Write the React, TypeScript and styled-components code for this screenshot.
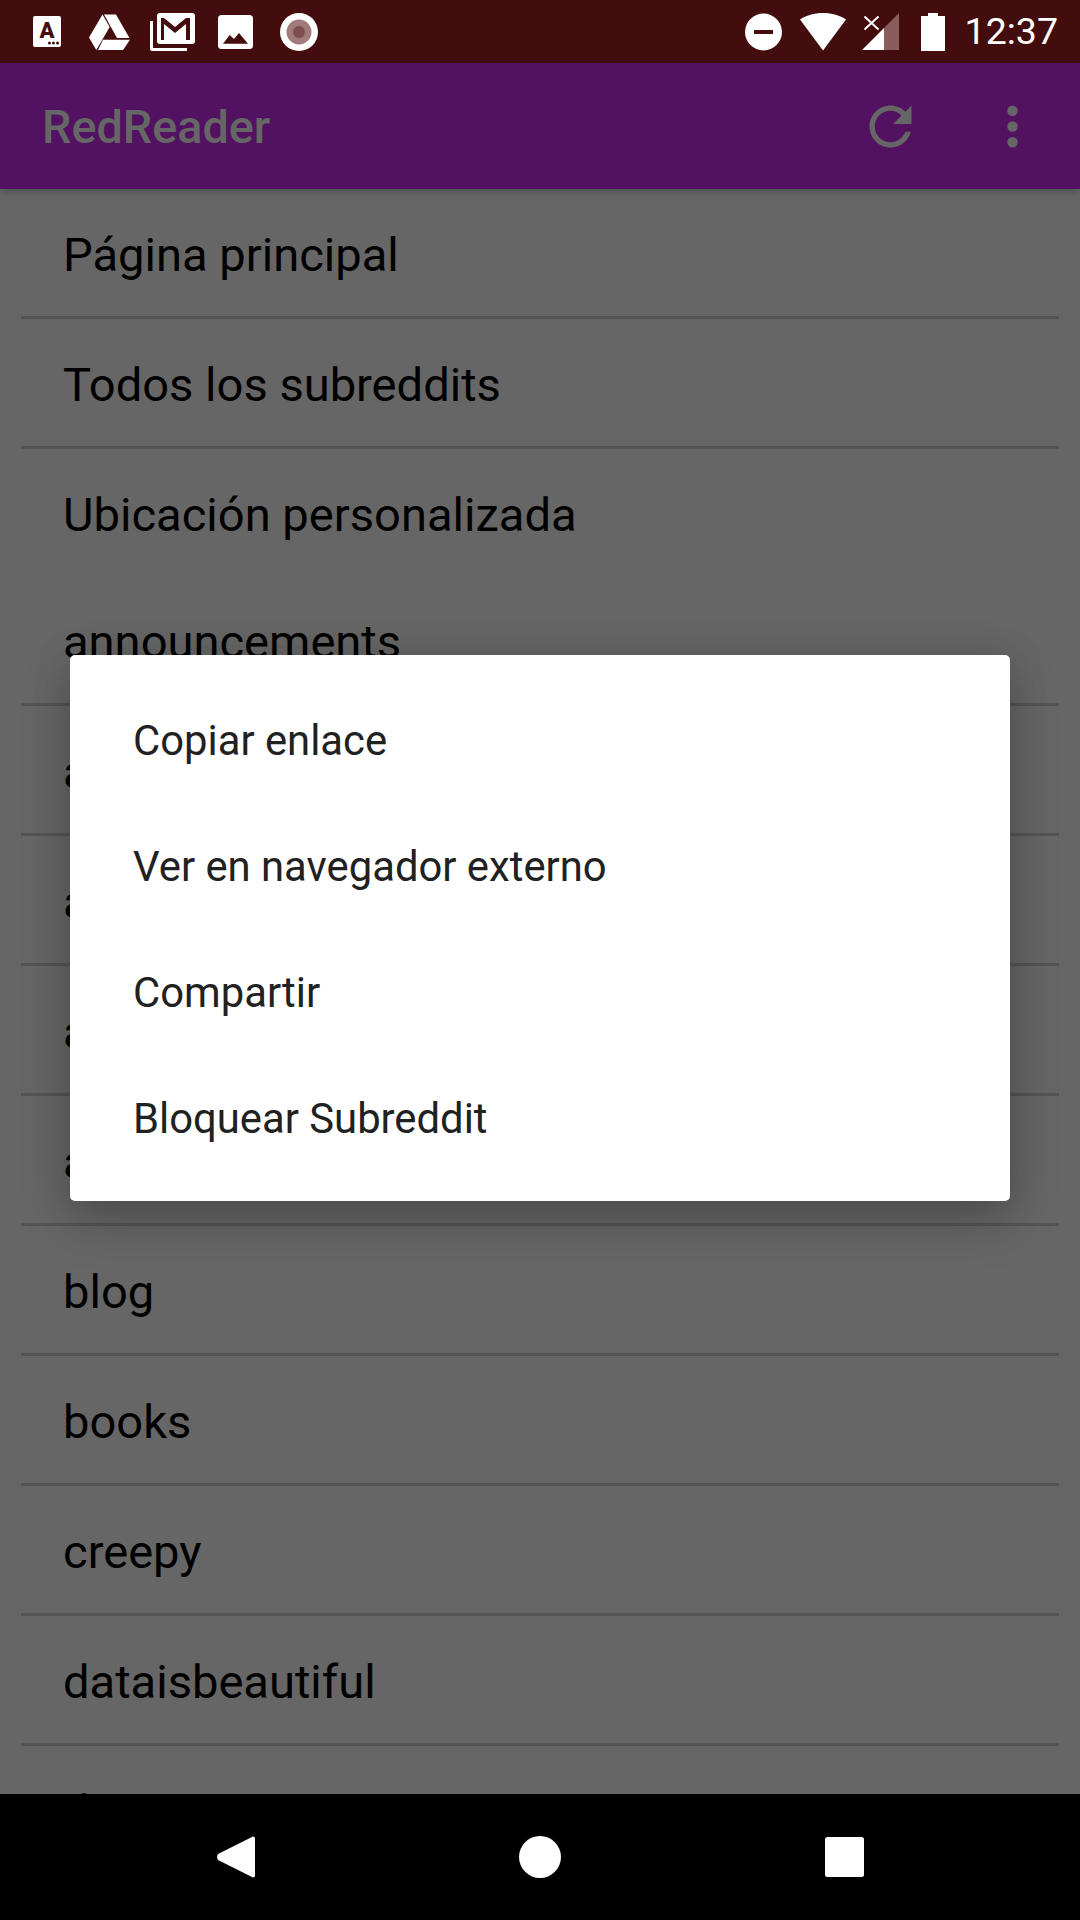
import { createGlobalStyle } from "styled-components";
import styled from "styled-components";

const subreddits = [
  "Página principal",
  "Todos los subreddits",
  "Ubicación personalizada",
  "announcements",
  "art",
  "askreddit",
  "askscience",
  "aww",
  "blog",
  "books",
  "creepy",
  "dataisbeautiful",
  "diy",
];

const menuItems = [
  "Copiar enlace",
  "Ver en navegador externo",
  "Compartir",
  "Bloquear Subreddit",
];

export default function App() {
  return (
    <Page>
      <GlobalStyle />
      <StatusBar>
        <Slot>
          <svg width="28" height="31" viewBox="0 0 28 31">
            <rect width="28" height="31" rx="2" fill="#fff" />
            <text x="14" y="22" textAnchor="middle" fontFamily="Roboto" fontWeight="900" fontSize="22" fill="#440d0d">
              A
            </text>
            <circle cx="16.5" cy="27" r="1.5" fill="#440d0d" />
            <circle cx="20.5" cy="27" r="1.5" fill="#440d0d" />
            <circle cx="24.5" cy="27" r="1.5" fill="#440d0d" />
          </svg>
        </Slot>
        <Slot>
          <svg width="41" height="36" viewBox="0 0 41 36" fill="#fff">
            <path d="M15 .500H27L40.500 24H28z" />
            <path d="M0 23.500 13.500 .500 20.700 13 7.300 36z" />
            <path d="M14 25.700H41L34 36H9z" />
          </svg>
        </Slot>
        <Slot>
          <svg width="45" height="38" viewBox="0 0 45 38">
            <path d="M0 8h3v27h34v3H2a2 2 0 0 1-2-2z" fill="#fff" />
            <rect x="7" y="0" width="38" height="31" rx="3" fill="#fff" />
            <path d="M11 5h3l11 9 11-9h4v22h-4V11l-11 9-11-9v16h-3z" fill="#440d0d" />
          </svg>
        </Slot>
        <Slot>
          <svg width="35" height="34" viewBox="0 0 35 34">
            <rect width="35" height="34" rx="3.500" fill="#fff" />
            <path d="M5 28.700 11.700 20l4.300 4 5-6 9 10.700z" fill="#440d0d" />
          </svg>
        </Slot>
        <Slot>
          <svg width="38" height="38" viewBox="0 0 38 38">
            <circle cx="19" cy="19" r="19" fill="#fff" />
            <circle cx="19" cy="19" r="12.500" fill="#a17a7a" />
            <circle cx="19" cy="19" r="6" fill="#7c4f4f" />
          </svg>
        </Slot>
        <StatusRight>
          <StatusIcon width="37" height="38" viewBox="0 0 37 38">
            <circle cx="18.500" cy="19" r="18.500" fill="#fff" />
            <rect x="9" y="17" width="19" height="4" fill="#440d0d" />
          </StatusIcon>
          <StatusIcon $gap={18} width="46" height="38" viewBox="0 0 46 38">
            <path d="M0 6.500C6 2.500 14 0 23 0s17 2.500 23 6.500L23 37.500z" fill="#fff" />
          </StatusIcon>
          <StatusIcon $gap={16} width="37" height="38" viewBox="0 0 37 38">
            <path d="M22 15 37 0v37H22z" fill="#8a5c5c" />
            <path d="M0 37 22 15v22z" fill="#fff" />
            <path d="M2.500 3.500 16.500 16.500M16.500 3.500 2.500 16.500" stroke="#fff" strokeWidth="2" />
          </StatusIcon>
          <StatusIcon $gap={22} width="24" height="38" viewBox="0 0 24 38">
            <path d="M7 0h10v3h7v35H0V3h7z" fill="#fff" />
          </StatusIcon>
          <Clock>12:37</Clock>
        </StatusRight>
      </StatusBar>

      <AppBar>
        <AppTitle>RedReader</AppTitle>
        <AppActions>
          <svg width="63" height="63" viewBox="0 0 24 24" fill="#666">
            <path d="M17.650 6.350C16.200 4.900 14.210 4 12 4c-4.420 0-7.990 3.580-7.990 8s3.570 8 7.990 8c3.730 0 6.840-2.550 7.730-6h-2.080c-.82 2.330-3.040 4-5.650 4-3.310 0-6-2.690-6-6s2.690-6 6-6c1.660 0 3.140.69 4.220 1.780L13 11h7V4l-2.350 2.350z" />
          </svg>
          <svg width="63" height="63" viewBox="0 0 24 24" fill="#666">
            <circle cx="12" cy="6" r="2" />
            <circle cx="12" cy="12" r="2" />
            <circle cx="12" cy="18" r="2" />
          </svg>
        </AppActions>
      </AppBar>

      <List>
        {subreddits.map((name, i) => (
          <Row key={name} $plain={i === 2}>
            {name}
          </Row>
        ))}
      </List>

      <NavBar>
        <NavSlot>
          <svg width="38" height="42" viewBox="0 0 38 42" fill="#fff">
            <path d="M36 .500c1 0 2 .8 2 2v37c0 1.200-1 2-2 2-.6 0-1-.3-1.500-.8L1 24c-1.300-1.700-1.300-4.300 0-6L34.500 1.300c.5-.5.9-.8 1.500-.8z" />
          </svg>
        </NavSlot>
        <NavSlot>
          <svg width="42" height="42" viewBox="0 0 42 42" fill="#fff">
            <circle cx="21" cy="21" r="21" />
          </svg>
        </NavSlot>
        <NavSlot>
          <svg width="39" height="40" viewBox="0 0 39 40" fill="#fff">
            <rect width="39" height="40" rx="2.500" />
          </svg>
        </NavSlot>
      </NavBar>

      <Dialog>
        {menuItems.map((item) => (
          <MenuItem key={item}>{item}</MenuItem>
        ))}
      </Dialog>
    </Page>
  );
}

const GlobalStyle = createGlobalStyle`
  html, body {
    margin: 0;
    padding: 0;
    background: #666;
  }
`;

const Page = styled.div`
  position: relative;
  display: flex;
  flex-direction: column;
  width: 1080px;
  height: 1920px;
  overflow: hidden;
  background: #666;
  font-family: Roboto, "Liberation Sans", sans-serif;
`;

const StatusBar = styled.div`
  display: flex;
  align-items: center;
  flex: none;
  height: 63px;
  padding-left: 15px;
  background: #440d0d;
`;

const Slot = styled.div`
  display: flex;
  align-items: center;
  justify-content: center;
  width: 63px;
  height: 63px;
`;

const StatusRight = styled.div`
  display: flex;
  align-items: center;
  margin-left: auto;
  padding-right: 22px;
`;

const StatusIcon = styled.svg<{ $gap?: number }>`
  display: block;
  margin-left: ${(p) => p.$gap ?? 0}px;
`;

const Clock = styled.span`
  margin-left: 20px;
  color: #fff;
  font-size: 37.5px;
  line-height: 63px;
`;

const AppBar = styled.header`
  position: relative;
  z-index: 1;
  display: flex;
  align-items: center;
  justify-content: space-between;
  flex: none;
  height: 126px;
  padding: 0 36px 0 42px;
  background: #521261;
  box-shadow: 0 3px 8px rgba(0, 0, 0, 0.2);
`;

const AppTitle = styled.h1`
  margin: 2px 0 0;
  color: #666;
  font-size: 46.75px;
  font-weight: 500;
`;

const AppActions = styled.div`
  display: flex;
  gap: 59px;
`;

const List = styled.div`
  flex: 1;
  min-height: 0;
  overflow: hidden;
`;

const Row = styled.div<{ $plain?: boolean }>`
  display: flex;
  align-items: center;
  box-sizing: border-box;
  height: ${(p) => (p.$plain ? 127 : 130)}px;
  margin: 0 21px;
  padding: 3px 0 0 42px;
  border-bottom: ${(p) => (p.$plain ? "none" : "3px solid #545454")};
  color: #000;
  font-size: 47.1px;
`;

const NavBar = styled.nav`
  display: flex;
  align-items: center;
  justify-content: center;
  flex: none;
  height: 126px;
  background: #000;
`;

const NavSlot = styled.div`
  display: flex;
  align-items: center;
  justify-content: center;
  width: 304px;
`;

const Dialog = styled.div`
  position: absolute;
  top: 655px;
  left: 70px;
  box-sizing: border-box;
  width: 940px;
  height: 546px;
  padding-top: 22px;
  border-radius: 5px;
  background: #fff;
  box-shadow: 0 20px 50px rgba(0, 0, 0, 0.22), 0 0 40px rgba(0, 0, 0, 0.1);
`;

const MenuItem = styled.div`
  display: flex;
  align-items: center;
  height: 126px;
  padding-left: 63px;
  color: #212121;
  font-size: 41.8px;
`;
